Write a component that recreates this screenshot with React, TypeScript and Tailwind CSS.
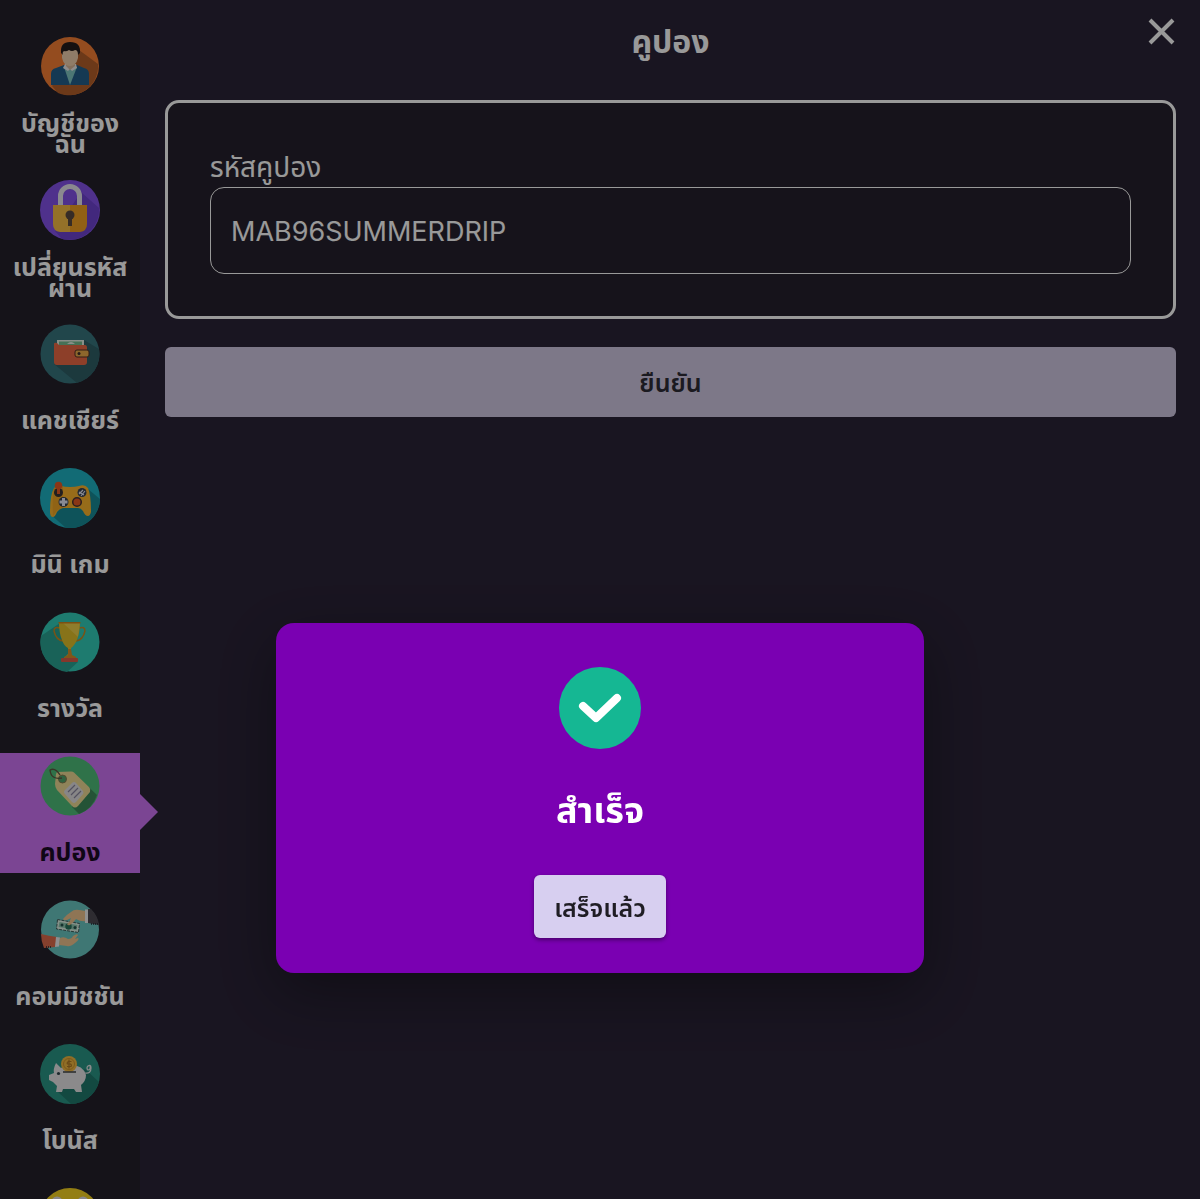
import type { ReactNode } from 'react';

function AccountIcon() {
  return (
    <>
      <circle cx="30" cy="30" r="29" fill="#f77f35" />
      <path d="M39 14 58 28A29 29 0 0 1 18 57L12 50Z" fill="#b4602a" />
      <path d="M11 49V38q0-5 5-6l8-3h13l7 3q5 1 5 6v11Z" fill="#245f8a" />
      <path d="M24 31 30 49 37 31Z" fill="#7fc6c1" />
      <path d="m25 28-2 4 5 3 2-2 2 2 5-3-1-4Z" fill="#efeaea" />
      <path d="M26 25h9v5l-5 4-4-4Z" fill="#d9ba9c" />
      <path d="M22 14h16v8q-2 8-8 8t-8-8Z" fill="#efcfae" />
      <path d="M21 17q-1-11 9-11 11 0 10 11l-2 2q0-5-3-5-3 2-6 0-3 2-5 1-2 1-1 4Z" fill="#231c1c" />
    </>
  );
}

function LockIcon() {
  return (
    <>
      <circle cx="30" cy="30" r="30" fill="#8452ea" />
      <path d="m41 12 18 16A30 30 0 0 1 22 59l-7-8Z" fill="#6f43d0" />
      <path d="M20.500 27V16a9.500 9.500 0 0 1 19 0v11" fill="none" stroke="#e6e5ee" strokeWidth="5" />
      <path d="M13 25h17v27H20q-7-1-7-8Z" fill="#f7bd45" />
      <path d="M30 25h17v19q0 7-7 8H30Z" fill="#f2a024" />
      <circle cx="30" cy="35" r="4.500" fill="#5b4a40" />
      <path d="M28 36h4v10h-4Z" fill="#5b4a40" />
    </>
  );
}

function WalletIcon() {
  return (
    <>
      <circle cx="30" cy="30" r="29.500" fill="#38757e" />
      <path d="m44 16 15 9A30 30 0 0 1 37 59L14 40Z" fill="#2f5f67" />
      <path d="M17 16h27v9H17Z" fill="#e5efe4" />
      <path d="M19 17.500h23v7H19Z" fill="#76bd90" />
      <path d="M27 20q4-4 8 0Z" fill="#e5efe4" />
      <path d="M14 20q0-2 3-1l2 2h26q2 0 2 3v14q0 3-3 3H17q-3 0-3-3Z" fill="#ec6a45" />
      <rect x="35" y="26" width="14" height="7" rx="2" fill="#ecac4a" stroke="#543025" strokeWidth="1" />
      <circle cx="39" cy="29.500" r="1.500" fill="#3c2d2a" />
    </>
  );
}

function GamepadIcon() {
  return (
    <>
      <circle cx="30" cy="30" r="30" fill="#1fb3c3" />
      <path d="m48 21 12 10A30 30 0 0 1 26 60L10 46Z" fill="#188b97" />
      <path d="M14 20q3-3 7-2 4 1 9 1t9-1q6-2 9 2 3 7 3 24-1 4-3 4-3 0-5-5-2-3-5-3H23q-4 1-6 4-2 5-4 5-3 0-3-5 0-17 4-24Z" fill="#fcb42c" />
      <path d="M14 20q-2 10-1 28l3-4q3-4 7-4V18q-6-1-9 2Z" fill="#df921a" opacity=".4" />
      <circle cx="18.500" cy="24.500" r="4.500" fill="#3a3434" />
      <path d="M17 18h3v8h-3Z" fill="#e75b25" />
      <circle cx="18.500" cy="17.500" r="3.800" fill="#e75b25" />
      <circle cx="23.500" cy="34" r="5" fill="#374354" />
      <path d="M23.500 30v8M19.500 34h8" stroke="#e3e7f5" strokeWidth="3" />
      <circle cx="37" cy="34" r="4.300" fill="#e75b25" stroke="#4b3433" strokeWidth="1.500" />
      <circle cx="42" cy="24.500" r="4.500" fill="#374354" />
      <path d="m39 26 4-4m-2 6 4-5m-6 1 5 3" stroke="#e3e7f5" strokeWidth="1.200" />
    </>
  );
}

function TrophyIcon() {
  return (
    <>
      <circle cx="30" cy="30" r="29.500" fill="#32cdb9" />
      <path d="M1 24 20 11l11 35 7 4-11 10A30 30 0 0 1 1 24Z" fill="#2aa393" />
      <path d="M20 16q-6-2-6 3 2 9 9 10M39 16q6-2 6 3-2 9-9 10" fill="none" stroke="#c98a24" strokeWidth="1.500" />
      <path d="M19 10h21q0 12-4 20-3 5-5 6v6l2 3h-8l3-3v-6q-4-2-6-8-3-7-3-18Z" fill="#e2c02a" />
      <path d="m23 11 15 14 2-15H22Z" fill="#f4d85c" opacity=".65" />
      <path d="M18.500 10h22v1.500h-22Z" fill="#d0861f" />
      <path d="M28 37h3l1 6 4 2v2H24v-2l4-2Z" fill="#d98f28" />
      <rect x="21" y="46" width="17" height="4" rx="1" fill="#dd5c48" />
    </>
  );
}

function CouponIcon() {
  return (
    <>
      <circle cx="30" cy="30" r="29.500" fill="#4fbf7a" />
      <path d="m38 21 19 18A30 30 0 0 1 39 58l-7-7Z" fill="#3d8a5b" />
      <path d="m17 16 14-.5q2 0 3 1L49 31q2 2 1 5L38 50q-3 3-6 0L17 34q-2-3-2-6l1-10Z" fill="#eedb94" />
      <circle cx="22.500" cy="23" r="4" fill="#4fa56c" stroke="#8a7d4e" strokeWidth="1" />
      <path d="M22 22Q11 24 10 14q5-3 10 5" fill="none" stroke="#605942" strokeWidth="1.400" />
      <path d="m25 34 7-7q2-2 4 0l7 8q1 2 0 3l-7 8q-2 2-4 0l-7-8q-2-2 0-4Z" fill="#e2e0e2" />
      <path d="m28 36 7-7m-4 10 7-7m-4 10 7-7" stroke="#8b88a0" strokeWidth="1.200" />
    </>
  );
}

function CommissionIcon() {
  return (
    <>
      <circle cx="30" cy="29.500" r="29" fill="#69c6c1" />
      <path d="m17.500 19.500 22 4-1 9-22-3.500Z" fill="#def0e4" stroke="#405b59" strokeWidth="1" strokeDasharray="3 1" />
      <path d="m19.500 22 18 3-1 5-18-3Z" fill="#8cc5ae" />
      <circle cx="28.500" cy="26.500" r="3.200" fill="#28745e" />
      <circle cx="22" cy="25" r="1.500" fill="#25524c" />
      <circle cx="35" cy="27.500" r="1.500" fill="#25524c" />
      <path d="m46 11-7-1q-5-1-8 2-5 3-8 7 1 2 4 1l4-2q-1 4-4 6 1 2 3 1 4-3 6-6 5 3 10 2Z" fill="#efc48e" />
      <path d="M45 9.500h3v13.500h-3Z" fill="#f1f0f0" />
      <path d="M48 9h3q7 7 8 16l-11-2Z" fill="#4d4a52" />
      <path d="M1 34q8 2 16 3l-2 10-11 1Q1 41 1 34Z" fill="#e06c4c" />
      <path d="m16 37 4 .5-1 9-4 .5Z" fill="#f1eef0" />
      <path d="M20 38q4-2 8 1 4 0 5-3 4-3 5-1l-3 4 3-1q2 1-3 5-5 4-8 3l-8-1Z" fill="#efc48e" />
      <path d="M6 47h6M51 24h7" stroke="#252934" strokeWidth="1.500" strokeDasharray="1 1" />
    </>
  );
}

function BonusIcon() {
  return (
    <>
      <circle cx="30" cy="30" r="30" fill="#2b9685" />
      <path d="m45 25 14 13A30 30 0 0 1 31 60L17 47Z" fill="#207a6d" />
      <path d="M45 29q6 1 6-5 0-4-3-2-2 2 0 4 3 0 2-5" fill="none" stroke="#e8e6e8" strokeWidth="1.200" />
      <path d="m16 19 5 5q4-3 10-3 12 0 15 10 0 6-5 10l1 7h-6l-2-3H23l-1 3h-6l1-6-4-4-4-2v-5l5-2q-1-4 2-10Z" fill="#e8e6e8" />
      <circle cx="29" cy="20" r="8" fill="#f0b840" />
      <circle cx="29" cy="20" r="5.500" fill="none" stroke="#d0942f" strokeWidth="1" />
      <path d="M31.500 17.500h-3q-2 1-1 2.500h3q1.500 1 .5 2.500h-4m2-7v9" fill="none" stroke="#b07a28" strokeWidth="1.200" />
      <path d="M23 28h13" stroke="#434648" strokeWidth="1.500" />
      <circle cx="18.500" cy="29.500" r="1.600" fill="#31444b" />
    </>
  );
}

function SmileyIcon() {
  return (
    <>
      <circle cx="30" cy="30" r="30" fill="#f5d220" />
      <circle cx="17" cy="14" r="5.500" fill="#e3e1e4" />
      <circle cx="43" cy="14" r="5.500" fill="#e3e1e4" />
      <circle cx="17" cy="13" r="2" fill="#5e5c61" />
      <circle cx="43" cy="13" r="2" fill="#5e5c61" />
      <path d="M16 33q14 21 28 0Z" fill="#62371f" />
    </>
  );
}

const items: { label: string[]; icon: ReactNode; active?: boolean }[] = [
  { label: ['บัญชีของ', 'ฉัน'], icon: <AccountIcon /> },
  { label: ['เปลี่ยนรหัส', 'ผ่าน'], icon: <LockIcon /> },
  { label: ['แคชเชียร์'], icon: <WalletIcon /> },
  { label: ['มินิ เกม'], icon: <GamepadIcon /> },
  { label: ['รางวัล'], icon: <TrophyIcon /> },
  { label: ['คปอง'], icon: <CouponIcon />, active: true },
  { label: ['คอมมิชชัน'], icon: <CommissionIcon /> },
  { label: ['โบนัส'], icon: <BonusIcon /> },
  { label: [], icon: <SmileyIcon /> },
];

function Sidebar() {
  return (
    <nav className="flex w-[140px] shrink-0 flex-col gap-6 bg-[#23202b] pt-[33px]">
      {items.map((item, i) => (
        <a
          key={i}
          href="#"
          aria-current={item.active ? 'page' : undefined}
          className={
            'relative flex h-[120px] shrink-0 flex-col items-center pt-[3px] text-[25px] leading-[21px] font-bold ' +
            (item.active ? 'bg-[#cd73f5] text-[#1a0b25]' : 'text-white')
          }
        >
          <svg viewBox="0 0 60 60" className="size-[60px] shrink-0" aria-hidden="true">
            {item.icon}
          </svg>
          <span className="flex flex-1 flex-col items-center justify-center pt-[18px] whitespace-nowrap">
            {item.label.map((line) => (
              <span key={line}>{line}</span>
            ))}
          </span>
          {item.active && (
            <svg viewBox="0 0 18 36" className="absolute top-[41px] left-full h-9 w-[18px]" aria-hidden="true">
              <path d="M0 0 18 18 0 36Z" fill="#cd73f5" />
            </svg>
          )}
        </a>
      ))}
    </nav>
  );
}

function CouponPage() {
  return (
    <main className="min-w-0 flex-1 pr-6 pl-[25px] text-white">
      <header className="relative flex h-[100px] items-start justify-center pt-[21px]">
        <h1 className="text-[32px] leading-[44px] font-bold">คูปอง</h1>
        <button type="button" aria-label="ปิด" className="absolute top-[18px] right-px size-7">
          <svg viewBox="0 0 28 28" className="size-7" fill="none" stroke="currentColor" strokeWidth="4">
            <path d="m3 2 23 23M26 2 3 25" />
          </svg>
        </button>
      </header>
      <form onSubmit={(e) => e.preventDefault()}>
        <div className="rounded-[14px] border-3 border-white bg-[#26212d] px-[42px] pt-12 pb-[42px]">
          <label htmlFor="coupon" className="block text-[28px] leading-9">
            รหัสคูปอง
          </label>
          <input
            id="coupon"
            type="text"
            defaultValue="MAB96SUMMERDRIP"
            className="block h-[87px] w-full rounded-[14px] border border-white bg-transparent px-5 pt-0.5 font-['Inter',sans-serif] text-[27px] outline-none"
          />
        </div>
        <button
          type="submit"
          className="mt-7 block h-[70px] w-full rounded-md bg-[#d0c8e3] pt-1.5 text-[25px] font-semibold text-[#2e2c36]"
        >
          ยืนยัน
        </button>
      </form>
    </main>
  );
}

function SuccessDialog() {
  return (
    <div className="fixed inset-0 flex items-start justify-center bg-black/40 pt-[52vh]">
      <div
        role="dialog"
        aria-modal="true"
        aria-labelledby="dialog-title"
        className="flex w-[54%] flex-col items-center rounded-[18px] bg-[#7a00b2] pt-11 pb-[35px] shadow-[0_20px_60px_rgba(0,0,0,0.35)]"
      >
        <svg viewBox="0 0 82 82" className="size-[82px]" aria-hidden="true">
          <circle cx="41" cy="41" r="41" fill="#15b793" />
          <path d="m24 39 13 12 21-20" fill="none" stroke="#fff" strokeWidth="8" strokeLinecap="round" strokeLinejoin="round" />
        </svg>
        <h2 id="dialog-title" className="text-4xl leading-[126px] font-bold text-white">
          สำเร็จ
        </h2>
        <button
          type="button"
          className="h-[63px] w-[132px] rounded-md bg-[#d7cff0] pt-1.5 text-[25px] font-semibold text-[#1f1d24] shadow-[0_2px_4px_rgba(0,0,0,0.4)]"
        >
          เสร็จแล้ว
        </button>
      </div>
    </div>
  );
}

export default function App() {
  return (
    <div className="flex h-screen overflow-hidden bg-[#2a2337] font-['Noto_Sans_Thai','Inter','Noto_Sans',sans-serif]">
      <Sidebar />
      <CouponPage />
      <SuccessDialog />
    </div>
  );
}
